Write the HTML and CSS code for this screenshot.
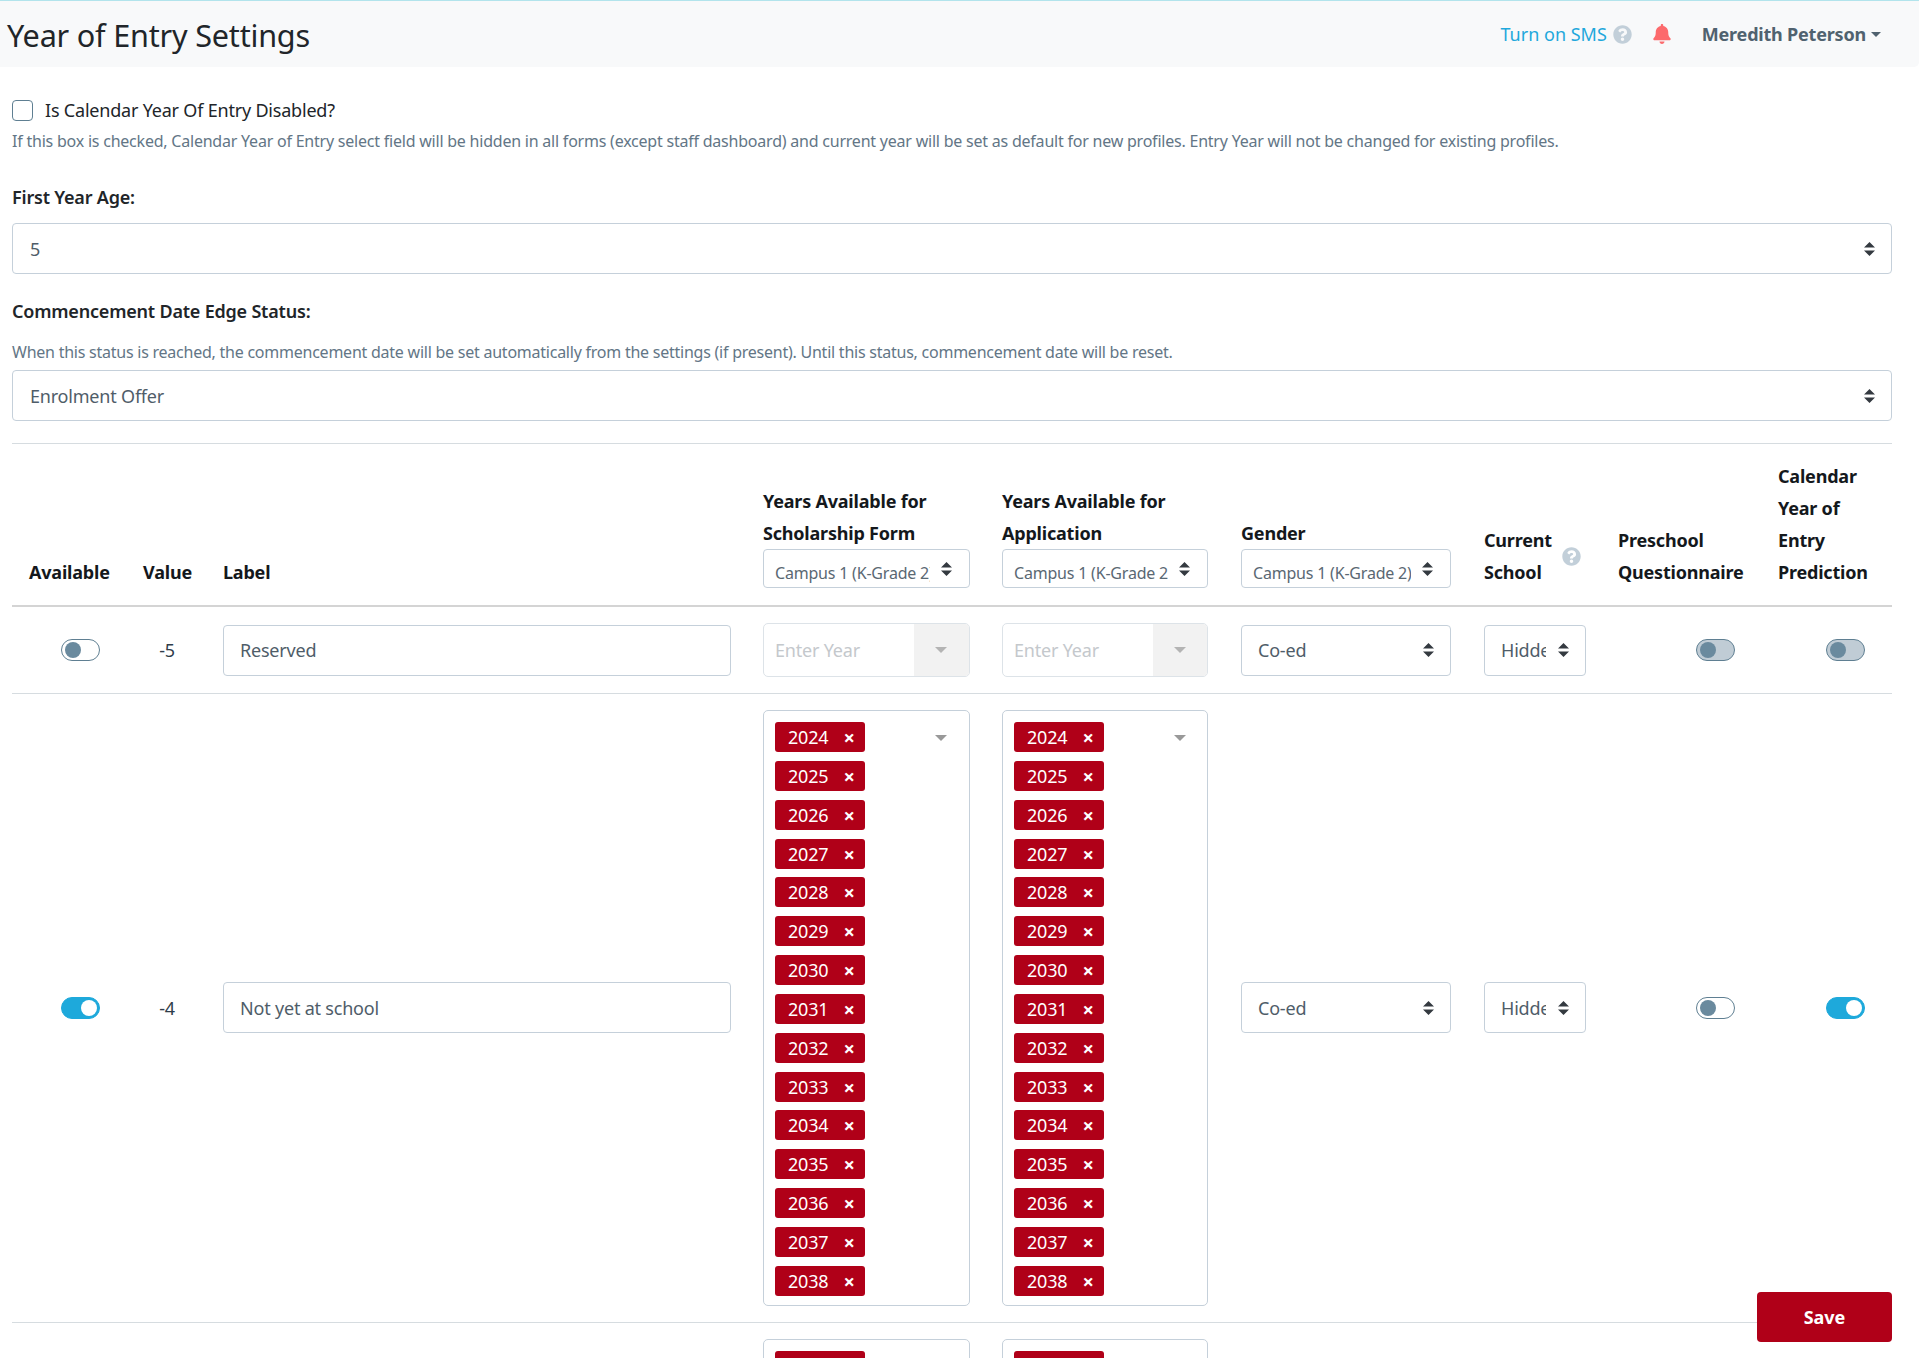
FILE: index.html
```html
<!DOCTYPE html>
<html lang="en">
<head>
<meta charset="utf-8">
<title>Year of Entry Settings</title>
<link rel="stylesheet" href="styles.css">
</head>
<body>
<svg class="defs" aria-hidden="true">
  <symbol id="q" viewBox="0 0 512 512"><path d="M504 256c0 136.997-111.043 248-248 248S8 392.997 8 256C8 119.083 119.043 8 256 8s248 111.083 248 248zM262.655 90c-54.497 0-89.255 22.957-116.549 63.758-3.536 5.286-2.353 12.415 2.715 16.258l34.699 26.31c5.205 3.947 12.621 3.008 16.665-2.122 17.864-22.658 30.113-35.797 57.303-35.797 20.429 0 45.698 13.148 45.698 32.958 0 14.976-12.363 22.667-32.534 33.976C247.128 238.528 216 254.941 216 296v4c0 6.627 5.373 12 12 12h56c6.627 0 12-5.373 12-12v-1.333c0-28.462 83.186-29.647 83.186-106.667 0-58.002-60.165-102-116.531-102zM256 338c-25.365 0-46 20.635-46 46 0 25.364 20.635 46 46 46s46-20.636 46-46c0-25.365-20.635-46-46-46z"/></symbol>
  <symbol id="bell" viewBox="0 0 448 512"><path d="M224 512c35.32 0 63.97-28.65 63.97-64H160.03c0 35.35 28.65 64 63.97 64zm215.39-149.71c-19.32-20.76-55.47-51.99-55.47-154.29 0-77.7-54.48-139.9-127.94-155.16V32c0-17.67-14.32-32-31.98-32s-31.98 14.33-31.98 32v20.84C118.56 68.1 64.08 130.3 64.08 208c0 102.3-36.15 133.53-55.47 154.29-6 6.45-8.66 14.16-8.61 21.71.11 16.4 12.98 32 32.1 32h383.8c19.12 0 32-15.6 32.1-32 .05-7.55-2.61-15.27-8.61-21.71z"/></symbol>
</svg>
<header class="topbar">
  <h1 class="title">Year of Entry Settings</h1>
  <div class="topbar-right">
    <a class="sms">Turn on SMS</a>
    <svg class="icon-q"><use href="#q"/></svg>
    <svg class="icon-bell"><use href="#bell"/></svg>
    <span class="user">Meredith Peterson</span><span class="caret"></span>
  </div>
</header>
<main class="content">
  <div class="check-row"><input type="checkbox" class="check" id="dis"><label for="dis" class="check-label">Is Calendar Year Of Entry Disabled?</label></div>
  <p class="help">If this box is checked, Calendar Year of Entry select field will be hidden in all forms (except staff dashboard) and current year will be set as default for new profiles. Entry Year will not be changed for existing profiles.</p>
  <label class="field-label first">First Year Age:</label>
  <select class="sel sel-full"><option>5</option></select>
  <label class="field-label second">Commencement Date Edge Status:</label>
  <p class="help help-2">When this status is reached, the commencement date will be set automatically from the settings (if present). Until this status, commencement date will be reset.</p>
  <select class="sel sel-full"><option>Enrolment Offer</option></select>
  <table class="grid">
    <thead>
      <tr>
        <th class="c1">Available</th>
        <th class="c2">Value</th>
        <th class="c3">Label</th>
        <th class="c4">Years Available for Scholarship Form<select class="sel sel-sm"><option>Campus 1 (K-Grade 2)</option></select></th>
        <th class="c4 c4b">Years Available for Application<select class="sel sel-sm"><option>Campus 1 (K-Grade 2)</option></select></th>
        <th class="c5">Gender<select class="sel sel-sm"><option>Campus 1 (K-Grade 2)</option></select></th>
        <th class="c6"><div class="cs">Current School<svg class="icon-hq"><use href="#q"/></svg></div></th>
        <th class="c7">Preschool Questionnaire</th>
        <th class="c8">Calendar Year of Entry Prediction</th>
      </tr>
    </thead>
    <tbody>
      <tr>
        <td class="tog-cell"><span class="toggle"></span></td>
        <td class="val">-5</td>
        <td><input class="text-input" value="Reserved"></td>
        <td><div class="multi disabled"><span class="ph">Enter Year</span><span class="multi-arrow"></span></div></td>
        <td class="c4b"><div class="multi disabled"><span class="ph">Enter Year</span><span class="multi-arrow"></span></div></td>
        <td class="c5"><select class="sel"><option>Co-ed</option></select></td>
        <td><select class="sel"><option>Hidden</option></select></td>
        <td class="tog-cell"><span class="toggle dis"></span></td>
        <td class="tog-cell"><span class="toggle dis"></span></td>
      </tr>
      <tr>
        <td class="tog-cell"><span class="toggle on"></span></td>
        <td class="val">-4</td>
        <td><input class="text-input" value="Not yet at school"></td>
        <td><div class="multi"><span class="tag">2024<i>×</i></span><span class="tag">2025<i>×</i></span><span class="tag">2026<i>×</i></span><span class="tag">2027<i>×</i></span><span class="tag">2028<i>×</i></span><span class="tag">2029<i>×</i></span><span class="tag">2030<i>×</i></span><span class="tag">2031<i>×</i></span><span class="tag">2032<i>×</i></span><span class="tag">2033<i>×</i></span><span class="tag">2034<i>×</i></span><span class="tag">2035<i>×</i></span><span class="tag">2036<i>×</i></span><span class="tag">2037<i>×</i></span><span class="tag">2038<i>×</i></span><span class="multi-arrow top"></span></div></td>
        <td class="c4b"><div class="multi"><span class="tag">2024<i>×</i></span><span class="tag">2025<i>×</i></span><span class="tag">2026<i>×</i></span><span class="tag">2027<i>×</i></span><span class="tag">2028<i>×</i></span><span class="tag">2029<i>×</i></span><span class="tag">2030<i>×</i></span><span class="tag">2031<i>×</i></span><span class="tag">2032<i>×</i></span><span class="tag">2033<i>×</i></span><span class="tag">2034<i>×</i></span><span class="tag">2035<i>×</i></span><span class="tag">2036<i>×</i></span><span class="tag">2037<i>×</i></span><span class="tag">2038<i>×</i></span><span class="multi-arrow top"></span></div></td>
        <td class="c5"><select class="sel"><option>Co-ed</option></select></td>
        <td><select class="sel"><option>Hidden</option></select></td>
        <td class="tog-cell"><span class="toggle"></span></td>
        <td class="tog-cell"><span class="toggle on"></span></td>
      </tr>
      <tr>
        <td></td><td></td><td></td>
        <td><div class="multi"><span class="tag blank"></span></div></td>
        <td class="c4b"><div class="multi"><span class="tag blank"></span></div></td>
        <td></td><td></td><td></td><td></td>
      </tr>
    </tbody>
  </table>
</main>
<button class="save">Save</button>
</body>
</html>
```
FILE: styles.css
```css
* { box-sizing: border-box; }
html, body { margin: 0; height: 100vh; overflow: hidden; background: #fff; }
body {
  font-family: "Noto Sans", "Open Sans", sans-serif;
  font-size: 18px;
  color: #2f3d4a;
  letter-spacing: -0.2px;
}
.defs { display: none; }

.topbar {
  display: flex;
  align-items: center;
  justify-content: space-between;
  height: 67px;
  margin-right: 2px;
  padding: 0 38px 0 7px;
  background: #f8f9fa;
  border-top: 1px solid #b2e4ec;
  border-bottom-right-radius: 5px;
}
.title { margin: 2px 0 0; font-size: 30.6px; font-weight: 400; color: #212529; letter-spacing: -0.2px; line-height: 1.2; }
.topbar-right { display: flex; align-items: center; }
.sms { font-size: 18px; letter-spacing: 0; color: #1fa8dc; }
.icon-q { width: 19px; height: 19px; margin-left: 6px; fill: #c2cfd9; }
.icon-bell { width: 18px; height: 20px; margin: 0 31px 0 21px; fill: #fc6a6c; }
.user { font-size: 18px; font-weight: 700; color: #50626f; }
.caret { width: 0; height: 0; margin-left: 5px; border: 5px solid transparent; border-top-color: #50626f; border-bottom: 0; }

.content { padding: 32px 29px 0 12px; }
.check-row { display: flex; align-items: center; height: 22px; }
.check { appearance: none; width: 21px; height: 21px; margin: 0 12px 0 0; border: 1px solid #5f7f92; border-radius: 4px; background: #fff; }
.check-label { color: #212529; }
.help { margin: 8px 0 0; font-size: 16px; line-height: 24px; letter-spacing: -0.22px; color: #637686; }
.help-2 { margin-top: 17px; margin-bottom: 6px; letter-spacing: -0.24px; }
.field-label { display: block; font-weight: 600; color: #212529; line-height: 24px; }
.first { margin-top: 32px; margin-bottom: 14px; }
.second { margin-top: 25px; }

.sel {
  display: block;
  appearance: none;
  width: 100%;
  height: 51px;
  padding: 0 39px 0 16px;
  border: 1px solid #c5d0da;
  border-radius: 4px;
  background-color: #fff;
  background-image: url("data:image/svg+xml,%3Csvg xmlns='http://www.w3.org/2000/svg' width='11' height='14' viewBox='0 0 11 14'%3E%3Cpath fill='%23343a40' d='M5.5 0 11 5.6H0zM5.5 14 0 8.4h11z'/%3E%3C/svg%3E");
  background-repeat: no-repeat;
  background-position: right 16px center;
  background-size: 11px 14px;
  font: inherit;
  letter-spacing: -0.2px;
  color: #4f5d69;
}
.sel-full { padding-left: 17px; }
.sel-sm { height: 39px; padding: 7px 39px 0 11px; font-size: 16px; font-weight: 400; color: #5a6873; background-position: right 17px center; }

.grid { width: 1880px; margin-top: 22px; border-collapse: collapse; table-layout: fixed; border-top: 1px solid #d6dce0; }
.grid th { padding: 16px 16px 17px; font-size: 18px; font-weight: 700; line-height: 32px; text-align: left; vertical-align: bottom; color: #14181c; border-bottom: 2px solid #d4d4d4; }
.grid td { padding: 16px; vertical-align: middle; border-bottom: 1px solid #d6dce0; }
.c1 { width: 115px; }
.c2 { width: 80px; text-align: center !important; }
.c3 { width: 540px; }
.c4 { width: 239px; }
.c5 { width: 243px; }
.c6 { width: 134px; }
.c7 { width: 160px; }
.c8 { width: 130px; }
.grid .c4b, .grid .c5 { padding-right: 17px; }
.grid th.c1 { padding-left: 17px; padding-right: 0; }
.grid th.c7 { padding-right: 0; }
.grid th.c8 { padding-right: 14px; }
.cs { display: flex; align-items: center; gap: 10px; padding-right: 6px; }
.icon-hq { flex: none; width: 19px; height: 19px; fill: #c2cfd9; }
.val { text-align: center; }
.grid .tog-cell { padding-right: 27px; }
.toggle { display: block; position: relative; width: 39px; height: 22px; margin-left: auto; border: 1px solid #5f7f92; border-radius: 11px; background: #fff; }
.toggle::after { content: ""; position: absolute; left: 3px; top: 2px; width: 16px; height: 16px; border-radius: 50%; background: #6a8a9e; }
.toggle.dis { background: #c0ccd5; }
.toggle.on { background: #1ea9db; border-color: #1ea9db; }
.toggle.on::after { left: 19px; background: #fff; }
.text-input { display: block; width: 100%; height: 51px; padding: 0 16px; border: 1px solid #c5d0da; border-radius: 4px; font: inherit; letter-spacing: -0.2px; color: #4f5d69; }

.multi { position: relative; display: flex; flex-direction: column; align-items: flex-start; gap: 8.85px; min-height: 54px; padding: 11px 11px 9px; border: 1px solid #c5d0da; border-radius: 5px; background: #fff; }
.multi.disabled { border-color: #dde3e8; justify-content: center; padding: 0 11px; }
.multi.disabled::after { content: ""; position: absolute; top: 0; right: 0; bottom: 0; width: 55px; background: #f2f2f2; border-radius: 0 4px 4px 0; }
.c4b .multi.disabled::after { width: 54px; }
.ph { color: #c4c8cc; }
.multi-arrow { position: absolute; z-index: 1; top: 50%; right: 22px; width: 0; height: 0; margin-top: -3px; border: 6px solid transparent; border-top: 6px solid #999; border-bottom: 0; }
.c4b .multi-arrow { right: 21px; }
.disabled .multi-arrow { border-top-color: #b4b4b4; }
.multi-arrow.top { top: 24px; margin-top: 0; }
.tag { display: flex; align-items: center; width: 90px; height: 30px; padding-left: 13px; border-radius: 3px; background: #b00018; color: #fff; }
.tag.blank { height: 30px; }
.tag i { margin: 2px 0 0 15px; font-style: normal; font-weight: 700; font-size: 20px; line-height: 1; }

.save { position: fixed; right: 29px; bottom: 16px; width: 135px; height: 50px; border: 0; border-radius: 4px; background: #b00018; color: #fff; font: inherit; font-weight: 700; }
```
